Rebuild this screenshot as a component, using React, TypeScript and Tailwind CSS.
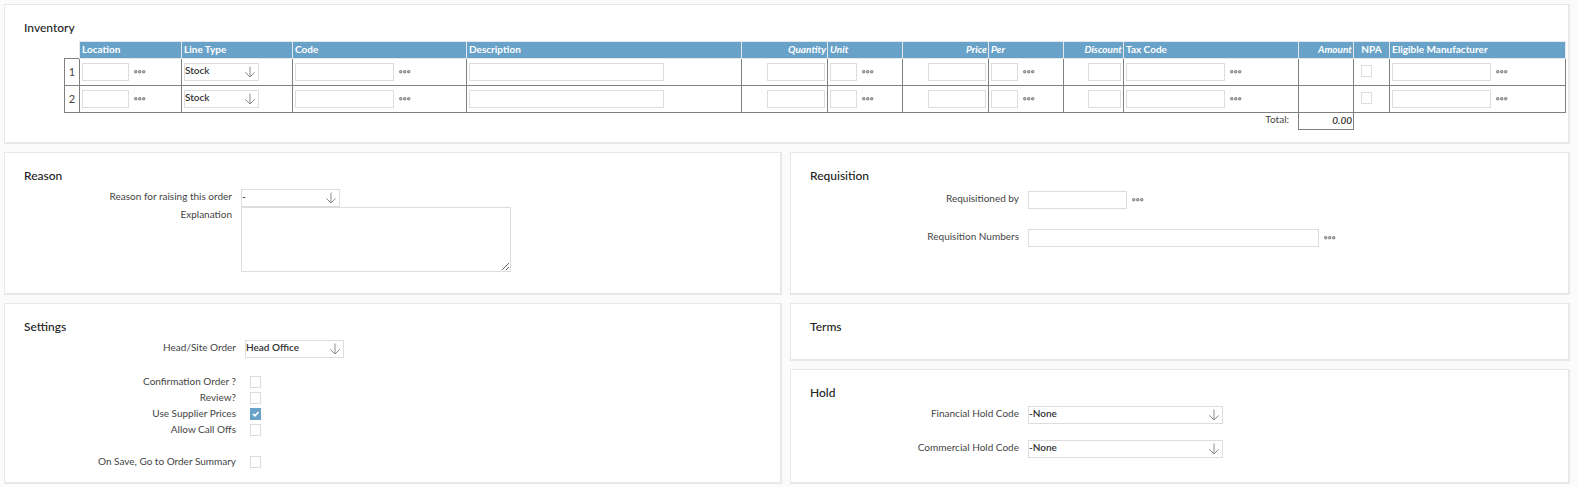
import type { ReactNode } from "react";

const inputClass =
  "block h-[18px] border border-[#dddddd] bg-white px-px text-[10px] text-[#333333] outline-none focus:border-[#68a2c8]";

function Card({ title, className = "", children }: { title: string; className?: string; children?: ReactNode }) {
  return (
    <section className={`border border-r-2 border-b-2 border-[#e8e8e8] bg-white pt-[15px] ${className}`}>
      <h2 className="mb-[5px] pl-[19px] text-[12px] leading-4 font-medium text-[#222222]">{title}</h2>
      {children}
    </section>
  );
}

function LookupButton({ label }: { label: string }) {
  return (
    <button type="button" aria-label={`Look up ${label}`} className="flex h-4 w-3 cursor-pointer items-center">
      <svg width="12" height="4" viewBox="0 0 12 4" fill="#b4b4b4" stroke="#808080" strokeWidth="1">
        <rect x="0.5" y="0.5" width="2.4" height="2.4" rx="0.9" />
        <rect x="4.5" y="0.5" width="2.4" height="2.4" rx="0.9" />
        <rect x="8.5" y="0.5" width="2.4" height="2.4" rx="0.9" />
      </svg>
    </button>
  );
}

function TextField({ id, label, width, lookup }: { id?: string; label: string; width: string; lookup?: boolean }) {
  return (
    <div className="flex items-center gap-[5px]">
      <input id={id} type="text" aria-label={id ? undefined : label} className={`${inputClass} ${width}`} />
      {lookup && <LookupButton label={label} />}
    </div>
  );
}

function SelectField({ id, label, width, options }: { id?: string; label: string; width: string; options: string[] }) {
  return (
    <div className={`relative ${width}`}>
      <select
        id={id}
        aria-label={id ? undefined : label}
        className="block h-[18px] w-full appearance-none border border-[#dddddd] bg-white pr-5 pb-[3px] pl-0 text-[10px] leading-[13px] font-semibold text-[#333333] outline-none"
      >
        {options.map((option) => (
          <option key={option}>{option}</option>
        ))}
      </select>
      <svg
        className="pointer-events-none absolute top-[3px] right-1"
        width="10"
        height="12"
        viewBox="0 0 10 12"
        fill="none"
      >
        <path d="M5 0.5V11" stroke="#b8b8b8" strokeWidth="1.6" />
        <path d="M0.4 6.4L5 11L9.6 6.4" stroke="#888888" strokeWidth="1" />
      </svg>
    </div>
  );
}

function Checkbox({ id, label, checked }: { id?: string; label: string; checked?: boolean }) {
  return (
    <span className="relative block h-3 w-[11px]">
      <input
        id={id}
        type="checkbox"
        aria-label={id ? undefined : label}
        defaultChecked={checked}
        className="peer block h-3 w-[11px] appearance-none border border-[#dddddd] bg-white checked:border-[#68a2c8] checked:bg-[#68a2c8]"
      />
      <svg
        className="pointer-events-none absolute inset-0 hidden peer-checked:block"
        width="11"
        height="12"
        viewBox="0 0 11 12"
        fill="none"
      >
        <path d="M3 5.8L5 7.8L8.6 4" stroke="#ffffff" strokeWidth="1.8" />
      </svg>
    </span>
  );
}

function Row({ id, label, labelWidth, children }: { id: string; label: string; labelWidth: string; children: ReactNode }) {
  return (
    <div className="flex items-start gap-[9px]">
      <label htmlFor={id} className={`shrink-0 text-right leading-[15px] ${labelWidth}`}>
        {label}
      </label>
      {children}
    </div>
  );
}

type Column = {
  title: string;
  width: string;
  align?: string;
  italic?: boolean;
  field: (label: string) => ReactNode;
};

const columns: Column[] = [
  { title: "Location", width: "w-[102px]", field: (l) => <TextField label={l} width="w-[47px]" lookup /> },
  {
    title: "Line Type",
    width: "w-[111px]",
    field: (l) => <SelectField label={l} width="w-[75px]" options={["Stock"]} />,
  },
  { title: "Code", width: "w-[174px]", field: (l) => <TextField label={l} width="w-[99px]" lookup /> },
  { title: "Description", width: "w-[275px]", field: (l) => <TextField label={l} width="w-[195px]" /> },
  {
    title: "Quantity",
    width: "w-[86px]",
    align: "right",
    italic: true,
    field: (l) => <TextField label={l} width="w-[58px]" />,
  },
  { title: "Unit", width: "w-[75px]", italic: true, field: (l) => <TextField label={l} width="w-[27px]" lookup /> },
  {
    title: "Price",
    width: "w-[86px]",
    align: "right",
    italic: true,
    field: (l) => <TextField label={l} width="w-[58px]" />,
  },
  { title: "Per", width: "w-[75px]", italic: true, field: (l) => <TextField label={l} width="w-[27px]" lookup /> },
  {
    title: "Discount",
    width: "w-[60px]",
    align: "right",
    italic: true,
    field: (l) => <TextField label={l} width="w-[33px]" />,
  },
  { title: "Tax Code", width: "w-[175px]", field: (l) => <TextField label={l} width="w-[99px]" lookup /> },
  { title: "Amount", width: "w-[55px]", align: "right", italic: true, field: () => null },
  {
    title: "NPA",
    width: "w-[36px]",
    align: "center",
    field: (l) => (
      <div className="pr-2.5 pb-0.5">
        <Checkbox label={l} />
      </div>
    ),
  },
  { title: "Eligible Manufacturer", width: "", field: (l) => <TextField label={l} width="w-[99px]" lookup /> },
];

function headAlign(align?: string) {
  if (align === "right") return "pr-px text-right";
  if (align === "center") return "text-center";
  return "pl-0.5 text-left";
}

function cellAlign(align?: string) {
  if (align === "right") return "justify-end pr-0.5";
  if (align === "center") return "justify-center";
  return "justify-start pl-0.5";
}

function InventoryTable() {
  return (
    <div className="overflow-x-auto pr-0.5 pl-[59px]">
      <table className="w-full min-w-[1400px] table-fixed border-collapse">
        <colgroup>
          <col className="w-[15px]" />
          {columns.map((c) => (
            <col key={c.title} className={c.width} />
          ))}
        </colgroup>
        <thead>
          <tr className="h-[17px]">
            <td className="p-0" />
            {columns.map((c) => (
              <th
                key={c.title}
                scope="col"
                className={`overflow-hidden border border-[#e4e8ec] bg-[#68a2c8] p-0 pb-px leading-[15px] font-bold whitespace-nowrap text-white ${headAlign(c.align)} ${c.italic ? "italic" : ""}`}
              >
                {c.title}
              </th>
            ))}
          </tr>
        </thead>
        <tbody>
          {[1, 2].map((row) => (
            <tr key={row} className="h-[27px]">
              <th scope="row" className="border border-[#808080] p-0 text-center text-[11px] leading-4 font-normal">
                {row}
              </th>
              {columns.map((c) => (
                <td key={c.title} className="border border-[#808080] p-0">
                  <div className={`flex items-center ${cellAlign(c.align)}`}>{c.field(`${c.title}, line ${row}`)}</div>
                </td>
              ))}
            </tr>
          ))}
        </tbody>
        <tfoot>
          <tr className="h-[17px]">
            <td colSpan={11} className="p-0 pr-[9px] pb-[3px] text-right leading-[13px]">
              Total:
            </td>
            <td className="border border-[#808080] p-0 pr-px pb-px text-right leading-[15px] font-semibold text-[#333333] italic">
              0.00
            </td>
            <td colSpan={2} className="p-0" />
          </tr>
        </tfoot>
      </table>
    </div>
  );
}

const toggles = [
  { id: "confirmation", label: "Confirmation Order ?" },
  { id: "review", label: "Review?" },
  { id: "supplier-prices", label: "Use Supplier Prices", checked: true },
  { id: "call-offs", label: "Allow Call Offs" },
];

function Toggle({ id, label, checked }: { id: string; label: string; checked?: boolean }) {
  return (
    <Row id={id} label={label} labelWidth="w-[231px]">
      <div className="h-4 pt-0.5 pl-[5px]">
        <Checkbox id={id} label={label} checked={checked} />
      </div>
    </Row>
  );
}

export default function App() {
  return (
    <main className="flex min-h-screen flex-col gap-2 bg-[#fbfbfb] pt-1 pr-2 pl-1 font-['Lato',sans-serif] text-[10px] text-[#444444]">
      <Card title="Inventory" className="pb-3">
        <InventoryTable />
      </Card>

      <div className="grid grid-cols-[389fr_390fr] gap-2">
        <Card title="Reason" className="pb-[21px]">
          <Row id="reason" label="Reason for raising this order" labelWidth="w-[227px]">
            <SelectField id="reason" label="Reason" width="w-[99px]" options={["-"]} />
          </Row>
          <Row id="explanation" label="Explanation" labelWidth="w-[227px]">
            <textarea
              id="explanation"
              className="block h-[65px] w-[270px] resize border border-[#dddddd] bg-white p-0.5 text-[#333333] outline-none"
            />
          </Row>
        </Card>

        <Card title="Requisition">
          <div className="flex flex-col gap-5 pt-0.5">
            <Row id="requisitioned-by" label="Requisitioned by" labelWidth="w-[228px]">
              <TextField id="requisitioned-by" label="Requisitioned by" width="w-[99px]" lookup />
            </Row>
            <Row id="requisition-numbers" label="Requisition Numbers" labelWidth="w-[228px]">
              <TextField id="requisition-numbers" label="Requisition Numbers" width="w-[291px]" lookup />
            </Row>
          </div>
        </Card>

        <Card title="Settings" className="pb-3">
          <Row id="head-site" label="Head/Site Order" labelWidth="w-[231px]">
            <SelectField id="head-site" label="Head/Site Order" width="w-[99px]" options={["Head Office"]} />
          </Row>
          <div className="py-4">
            {toggles.map((t) => (
              <Toggle key={t.id} {...t} />
            ))}
          </div>
          <Toggle id="go-to-summary" label="On Save, Go to Order Summary" />
        </Card>

        <div className="flex flex-col gap-2">
          <Card title="Terms" className="pb-[19px]" />
          <Card title="Hold" className="grow pb-6">
            <div className="flex flex-col gap-4">
              <Row id="financial-hold" label="Financial Hold Code" labelWidth="w-[228px]">
                <SelectField id="financial-hold" label="Financial Hold Code" width="w-[195px]" options={["-None"]} />
              </Row>
              <Row id="commercial-hold" label="Commercial Hold Code" labelWidth="w-[228px]">
                <SelectField id="commercial-hold" label="Commercial Hold Code" width="w-[195px]" options={["-None"]} />
              </Row>
            </div>
          </Card>
        </div>
      </div>
    </main>
  );
}
